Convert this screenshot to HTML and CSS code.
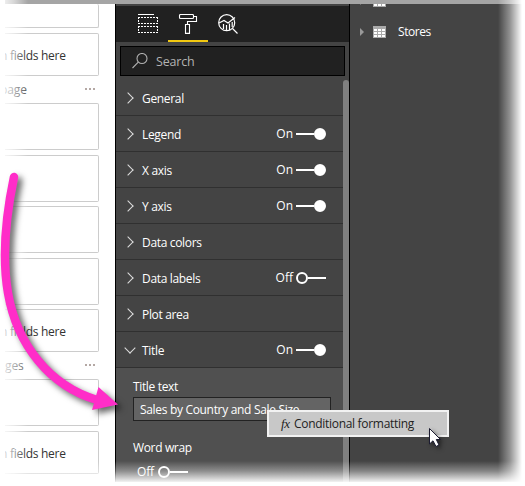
FILE: index.html
```html
<!DOCTYPE html>
<html lang="en">
<head>
<meta charset="utf-8">
<title>Format pane</title>
<link rel="stylesheet" href="styles.css">
</head>
<body>
<div class="screen">
  <div class="topbar"></div>
  <div class="columns">
    <section class="wells">
      <div class="well first"></div>
      <div class="well drop">n fields here</div>
      <div class="well-label"><span>page</span><i class="dots"><b></b><b></b><b></b></i></div>
      <div class="well"></div>
      <div class="well"></div>
      <div class="well"></div>
      <div class="well"></div>
      <div class="well drop">n fields here</div>
      <div class="well-label second"><span>ges</span><i class="dots"><b></b><b></b><b></b></i></div>
      <div class="well"></div>
      <div class="well drop">n fields here</div>
    </section>

    <section class="pane">
      <nav class="tabs">
        <div class="tab">
          <svg width="20" height="20" viewBox="0 0 20 20" fill="none" stroke="#fff"><path d="M0 .5H16"/><path d="M0 3.5H20M0 9.5H20M0 12.5H20M0 18.5H20M.5 3V10M19.5 3V10M.5 12V19M19.5 12V19" stroke-dasharray="2 1"/></svg>
        </div>
        <div class="tab active">
          <svg width="20" height="20" viewBox="0 0 20 20" fill="none" stroke="#fff" stroke-width="1.1"><path d="M2.500.5H14.500Q15.500.5 15.500 1.500V3.500Q15.500 4.500 14.500 4.500H2.500Q1.500 4.500 1.500 3.500V1.500Q1.500.5 2.500.5ZM15.500 2.500H18.500V7.500H9.500V10.500M7.500 10.500H11.500V19.400H7.500Z"/></svg>
        </div>
        <div class="tab">
          <svg width="20" height="20" viewBox="0 0 20 20" fill="none" stroke="#fff" stroke-width="1.2"><circle cx="8.7" cy="8.7" r="8"/><path d="M1 9 6 6.5 10 9 17 3.5M5.5 10V15M8.5 11V17M11.5 9.500V16M14.2 8V13M14.500 14.500 19.500 19.500"/></svg>
        </div>
      </nav>
      <div class="search">
        <svg width="16" height="16" viewBox="0 0 16 16" fill="none" stroke="#b0b0b0" stroke-width="1.1"><circle cx="10" cy="5.500" r="5"/><path d="M6.300 9.200.500 15"/></svg>
        <span>Search</span>
      </div>
      <div class="scroll">
        <div class="cards">
          <div class="card"><i class="chev"></i><span>General</span></div>
          <div class="card"><i class="chev"></i><span>Legend</span><em>On</em><i class="toggle on"></i></div>
          <div class="card"><i class="chev"></i><span>X axis</span><em>On</em><i class="toggle on"></i></div>
          <div class="card"><i class="chev"></i><span>Y axis</span><em>On</em><i class="toggle on"></i></div>
          <div class="card"><i class="chev"></i><span>Data colors</span></div>
          <div class="card"><i class="chev"></i><span>Data labels</span><em>Off</em><i class="toggle"></i></div>
          <div class="card"><i class="chev"></i><span>Plot area</span></div>
          <div class="card"><i class="chev open"></i><span>Title</span><em>On</em><i class="toggle on"></i></div>
          <div class="body">
            <div class="field-label">Title text</div>
            <div class="input">Sales by Country and Sale Size</div>
            <div class="field-label wrap">Word wrap</div>
            <div class="wrap-toggle"><em>Off</em><i class="toggle"></i></div>
          </div>
        </div>
        <div class="thumb"></div>
      </div>
    </section>

    <section class="fields">
      <div class="table cut"><i class="caret"></i><svg class="grid" width="13" height="12"><path fill="#aaa" d="M0 0H13V12H0Z"/><path fill="#fff" d="M1 3H4V5H1ZM5 3H8V5H5ZM9 3H12V5H9ZM1 6H4V8H1ZM5 6H8V8H5ZM9 6H12V8H9ZM1 9H4V11H1ZM5 9H8V11H5ZM9 9H12V11H9Z"/></svg></div>
      <div class="table"><i class="caret"></i><svg class="grid" width="13" height="12"><path fill="#aaa" d="M0 0H13V12H0Z"/><path fill="#fff" d="M1 3H4V5H1ZM5 3H8V5H5ZM9 3H12V5H9ZM1 6H4V8H1ZM5 6H8V8H5ZM9 6H12V8H9ZM1 9H4V11H1ZM5 9H8V11H5ZM9 9H12V11H9Z"/></svg><span>Stores</span></div>
    </section>
  </div>

  <div class="fade left"></div>
  <div class="fade right"></div>
  <div class="fade bottom"></div>

  <div class="menu"><i>fx</i><span>Conditional formatting</span></div>

  <svg class="marks" width="525" height="486" viewBox="0 0 525 486">
    <g class="arrow"><path d="M14 177C6 215 2 258 8 293C17 345 50 386 97 400" fill="none" stroke="#ff2dc8" stroke-width="8.500" stroke-linecap="round"/><path d="M98.500 387 118 404.500 92 410Z" fill="#ff2dc8"/></g>
    <path class="cursor" d="M429.500 428.500V444L433 440.800 436 446.500 439 445 436.300 439.500H440.500Z" fill="#fff" stroke="#1b1b30"/>
  </svg>
</div>
</body>
</html>
```

FILE: styles.css
```css
* { box-sizing: border-box; }
body {
  margin: 0;
  background: #fff;
  font: 12px/16px "Open Sans", "Noto Sans", sans-serif;
  overflow: hidden;
}
i, em { font-style: normal; }
.screen { position: relative; width: 525px; height: 486px; overflow: hidden; }
.topbar { height: 4px; background: #a5a5a5; }
.columns { display: grid; grid-template-columns: 115px 235px 175px; height: 482px; }

.wells { overflow: hidden; color: #333; padding-right: 16px; }
.well {
  height: 47px;
  margin-bottom: 4.500px;
  border: 1px solid #ccc;
  border-left: 0;
  border-radius: 0 2px 2px 0;
}
.well.first { height: 24px; border-top: 0; margin-bottom: 5px; }
.well.drop { height: 43px; padding: 14px 0 0; margin-bottom: 0; white-space: nowrap; letter-spacing: -.28px; }
.well-label { height: 27px; padding: 6px 4px 0 0; display: flex; justify-content: space-between; color: #555; letter-spacing: -.1px; }
.well-label.second span { margin-left: 5px; }
.dots { display: flex; gap: 2px; padding-top: 6px; }
.dots b { width: 2px; height: 2px; background: #b4a8a4; }

.pane { background: #444; border: solid #000; border-width: 0 1px; padding-top: 2px; color: #fff; overflow: hidden; }
.tabs { height: 36px; background: #212121; display: flex; padding-left: 12px; }
.tab { width: 40px; padding: 8px 0 0 10px; }
.tab.active { border-bottom: 2px solid #f2c811; }
.tab svg { display: block; }
.search {
  margin: 4px 4px 0;
  height: 30px;
  border: 1px solid #000;
  background: #212121;
  color: #b3b3b3;
  display: flex;
  align-items: center;
  gap: 8px;
  padding: 1px 0 0 11px;
  font-size: 12.500px;
  letter-spacing: -.2px;
}
.search svg { margin-top: -2px; }
.scroll { display: flex; height: 406px; padding-top: 4px; }
.cards { width: 227px; flex: none; }
.card { height: 36px; border-bottom: 1px solid #303030; display: flex; align-items: center; padding: 2px 17px 0 10px; letter-spacing: -.33px; }
.card span { margin-left: 8px; flex: 1; }
.card em { margin: -1px 3px 0 0; letter-spacing: 0; }
.chev { width: 8px; height: 8px; border: solid #ddd; border-width: 1px 1px 0 0; transform: translate(-3px, -1px) rotate(45deg); margin-right: -1px; margin-left: 1px; }
.chev.open { transform: translate(-1px, -3px) rotate(135deg); }
.toggle { width: 30px; height: 12px; display: flex; align-items: center; flex: none; margin-top: -1px; }
.toggle::before { content: ""; width: 12px; height: 12px; border: 2px solid #fff; border-radius: 50%; box-sizing: border-box; }
.toggle::after { content: ""; flex: 1; height: 2px; background: #fff; }
.toggle.on { flex-direction: row-reverse; }
.toggle.on::before { background: #fff; }
.body { height: 118px; background: #505050; padding: 11px 12px 0 17px; }
.field-label { letter-spacing: -.35px; }
.input { margin-top: 2px; height: 24px; width: 198px; background: #646464; border: 1px solid #222; padding: 4px 6px 0; white-space: nowrap; letter-spacing: -.32px; }
.wrap { margin-top: 19px; }
.wrap-toggle { display: flex; align-items: center; gap: 4px; padding: 8px 0 0 4px; letter-spacing: -.2px; }
.thumb { width: 6px; background: #808080; border-radius: 3px 3px 0 0; }

.fields { background: #444; color: #fff; }
.table { height: 34px; display: flex; align-items: center; padding: 11px 0 0 10px; }
.table.cut { height: 6px; padding: 0 0 0 10px; align-items: flex-end; overflow: hidden; }
.table.cut .grid { margin-bottom: 3px; }
.table.cut .caret { margin-bottom: 5px; }
.caret { border: 4px solid transparent; border-left-color: #999; border-right: 0; margin-right: 9px; }
.grid { flex: none; margin-top: -10px; }
.table:not(.cut) .grid, .table:not(.cut) .caret { margin-top: -9px; }
.table span { margin: -10px 0 0 12px; letter-spacing: -.45px; }

.table:not(.cut) { padding-top: 19px; }

.fade { position: absolute; }
.fade.left { left: 0; top: 0; width: 28px; height: 486px; background: linear-gradient(to right, #fff 5px, rgba(255,255,255,.8) 5px, rgba(255,255,255,.55) 14px, rgba(255,255,255,0)); }
.fade.right { left: 498px; top: 0; width: 27px; height: 486px; background: linear-gradient(to right, rgba(255,255,255,0), rgba(255,255,255,.42) 12px, #fff 24px); }
.fade.bottom { left: 0; top: 461px; width: 525px; height: 25px; background: linear-gradient(to bottom, rgba(255,255,255,0), rgba(255,255,255,.35) 10px, rgba(255,255,255,.93) 21px, #fff 21px); }
.menu {
  position: absolute;
  left: 267px;
  top: 410px;
  width: 182px;
  height: 27px;
  border: 2px solid #f2f2f2;
  background: #c8c8c8;
  color: #222;
  display: flex;
  align-items: center;
  padding-left: 12px;
  white-space: nowrap;
  letter-spacing: -.3px;
}
.menu i { width: 13px; font: italic 13px "Liberation Serif", serif; }
.marks { position: absolute; left: 0; top: 0; }
.arrow { filter: drop-shadow(4px 4px 3px rgba(0,0,0,.6)); }
.cursor { filter: drop-shadow(2px 2px 2px rgba(0,0,0,.5)); }
```
